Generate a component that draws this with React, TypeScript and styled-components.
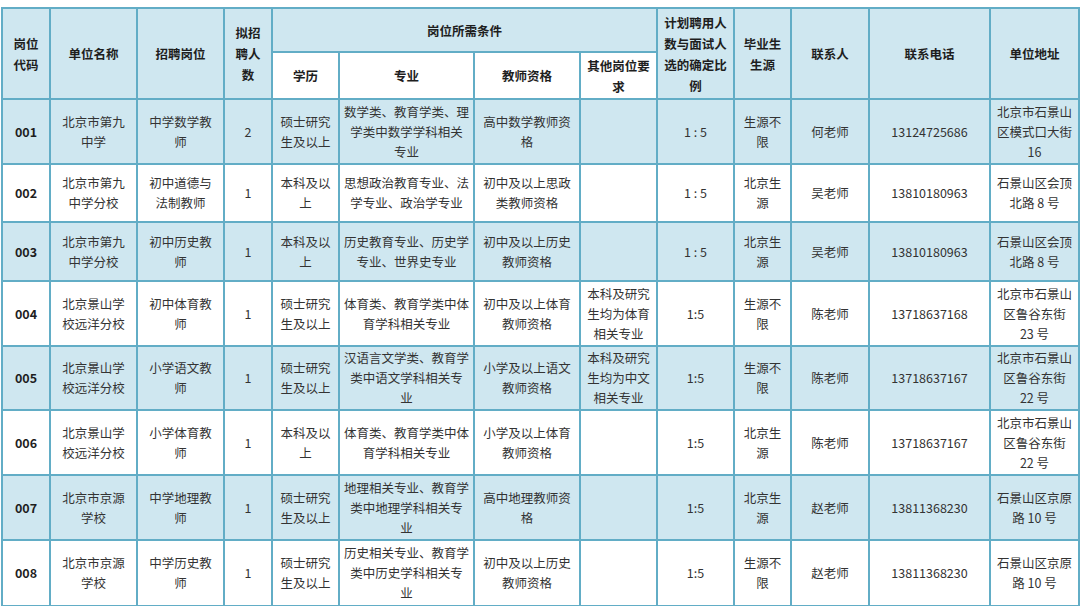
import styled, { createGlobalStyle } from 'styled-components'

/**
 * 招聘岗位数据
 * 每个单元格用 \n 表示原表中的换行位置
 */
interface JobRow {
  code: string
  unit: string
  post: string
  count: string
  degree: string
  major: string
  cert: string
  other: string
  ratio: string
  source: string
  contact: string
  phone: string
  address: string
  height: number
}

const rows: JobRow[] = [
  {
    code: '001',
    unit: '北京市第九\n中学',
    post: '中学数学教\n师',
    count: '2',
    degree: '硕士研究\n生及以上',
    major: '数学类、教育学类、理\n学类中数学学科相关\n专业',
    cert: '高中数学教师资\n格',
    other: '',
    ratio: '1 : 5',
    source: '生源不\n限',
    contact: '何老师',
    phone: '13124725686',
    address: '北京市石景山\n区模式口大街\n16',
    height: 65,
  },
  {
    code: '002',
    unit: '北京市第九\n中学分校',
    post: '初中道德与\n法制教师',
    count: '1',
    degree: '本科及以\n上',
    major: '思想政治教育专业、法\n学专业、政治学专业',
    cert: '初中及以上思政\n类教师资格',
    other: '',
    ratio: '1 : 5',
    source: '北京生\n源',
    contact: '吴老师',
    phone: '13810180963',
    address: '石景山区会顶\n北路 8 号',
    height: 58,
  },
  {
    code: '003',
    unit: '北京市第九\n中学分校',
    post: '初中历史教\n师',
    count: '1',
    degree: '本科及以\n上',
    major: '历史教育专业、历史学\n专业、世界史专业',
    cert: '初中及以上历史\n教师资格',
    other: '',
    ratio: '1 : 5',
    source: '北京生\n源',
    contact: '吴老师',
    phone: '13810180963',
    address: '石景山区会顶\n北路 8 号',
    height: 59,
  },
  {
    code: '004',
    unit: '北京景山学\n校远洋分校',
    post: '初中体育教\n师',
    count: '1',
    degree: '硕士研究\n生及以上',
    major: '体育类、教育学类中体\n育学科相关专业',
    cert: '初中及以上体育\n教师资格',
    other: '本科及研究\n生均为体育\n相关专业',
    ratio: '1:5',
    source: '生源不\n限',
    contact: '陈老师',
    phone: '13718637168',
    address: '北京市石景山\n区鲁谷东街\n23 号',
    height: 65,
  },
  {
    code: '005',
    unit: '北京景山学\n校远洋分校',
    post: '小学语文教\n师',
    count: '1',
    degree: '硕士研究\n生及以上',
    major: '汉语言文学类、教育学\n类中语文学科相关专\n业',
    cert: '小学及以上语文\n教师资格',
    other: '本科及研究\n生均为中文\n相关专业',
    ratio: '1:5',
    source: '生源不\n限',
    contact: '陈老师',
    phone: '13718637167',
    address: '北京市石景山\n区鲁谷东街\n22 号',
    height: 64,
  },
  {
    code: '006',
    unit: '北京景山学\n校远洋分校',
    post: '小学体育教\n师',
    count: '1',
    degree: '本科及以\n上',
    major: '体育类、教育学类中体\n育学科相关专业',
    cert: '小学及以上体育\n教师资格',
    other: '',
    ratio: '1:5',
    source: '北京生\n源',
    contact: '陈老师',
    phone: '13718637167',
    address: '北京市石景山\n区鲁谷东街\n22 号',
    height: 65,
  },
  {
    code: '007',
    unit: '北京市京源\n学校',
    post: '中学地理教\n师',
    count: '1',
    degree: '硕士研究\n生及以上',
    major: '地理相关专业、教育学\n类中地理学科相关专\n业',
    cert: '高中地理教师资\n格',
    other: '',
    ratio: '1:5',
    source: '北京生\n源',
    contact: '赵老师',
    phone: '13811368230',
    address: '石景山区京原\n路 10 号',
    height: 65,
  },
  {
    code: '008',
    unit: '北京市京源\n学校',
    post: '中学历史教\n师',
    count: '1',
    degree: '硕士研究\n生及以上',
    major: '历史相关专业、教育学\n类中历史学科相关专\n业',
    cert: '初中及以上历史\n教师资格',
    other: '',
    ratio: '1:5',
    source: '生源不\n限',
    contact: '赵老师',
    phone: '13811368230',
    address: '石景山区京原\n路 10 号',
    height: 66,
  },
]

/** 列宽 (px) */
const colWidths = [48, 87, 87, 48, 67, 135, 106, 77, 77, 57, 78, 121, 89]

const BLUE = '#cfe7f0'
const LINE = '#62adc6'

const GlobalStyle = createGlobalStyle`
  html, body {
    margin: 0;
    padding: 0;
    height: 606px;
    overflow: hidden;
    background: #ffffff;
  }
`

const Page = styled.div`
  padding: 7px 0 0 1px;
  font-family: "Noto Sans CJK SC", "Noto Sans", sans-serif;
`

const Table = styled.table`
  border-collapse: collapse;
  table-layout: fixed;
  width: 1078px;
`

const HeadCell = styled.th<{ $sub?: boolean; $h?: number }>`
  border: 2px solid ${LINE};
  background: ${({ $sub }) => ($sub ? '#ffffff' : BLUE)};
  height: ${({ $h }) => ($h ? `${$h}px` : 'auto')};
  padding: 0 1px;
  font-size: 12.5px;
  line-height: 21px;
  font-weight: 700;
  color: #1e1e1e;
  text-align: center;
  vertical-align: middle;
  white-space: pre-line;
`

const BodyRow = styled.tr<{ $tint: boolean }>`
  background: ${({ $tint }) => ($tint ? BLUE : '#ffffff')};
`

const Cell = styled.td<{ $bold?: boolean; $h: number }>`
  border: 2px solid ${LINE};
  height: ${({ $h }) => $h - 2}px;
  padding: 0 1px;
  font-size: 12.5px;
  line-height: 20px;
  font-weight: ${({ $bold }) => ($bold ? 700 : 400)};
  color: ${({ $bold }) => ($bold ? '#1e1e1e' : '#333333')};
  text-align: center;
  vertical-align: middle;
  white-space: pre-line;
  overflow: hidden;
`

const fields: (keyof JobRow)[] = [
  'unit', 'post', 'count', 'degree', 'major', 'cert', 'other',
  'ratio', 'source', 'contact', 'phone', 'address',
]

export default function App() {
  return (
    <Page>
      <GlobalStyle />
      <Table>
        <colgroup>
          {colWidths.map((w, i) => (
            <col key={i} style={{ width: w }} />
          ))}
        </colgroup>
        <thead>
          <tr>
            <HeadCell rowSpan={2}>{'岗位\n代码'}</HeadCell>
            <HeadCell rowSpan={2}>单位名称</HeadCell>
            <HeadCell rowSpan={2}>招聘岗位</HeadCell>
            <HeadCell rowSpan={2}>{'拟招\n聘人\n数'}</HeadCell>
            <HeadCell colSpan={4} $h={42}>岗位所需条件</HeadCell>
            <HeadCell rowSpan={2}>{'计划聘用人\n数与面试人\n选的确定比\n例'}</HeadCell>
            <HeadCell rowSpan={2}>{'毕业生\n生源'}</HeadCell>
            <HeadCell rowSpan={2}>联系人</HeadCell>
            <HeadCell rowSpan={2}>联系电话</HeadCell>
            <HeadCell rowSpan={2}>单位地址</HeadCell>
          </tr>
          <tr>
            <HeadCell $sub $h={45}>学历</HeadCell>
            <HeadCell $sub>专业</HeadCell>
            <HeadCell $sub>教师资格</HeadCell>
            <HeadCell $sub>{'其他岗位要\n求'}</HeadCell>
          </tr>
        </thead>
        <tbody>
          {rows.map((r, i) => (
            <BodyRow key={r.code} $tint={i % 2 === 0}>
              <Cell $bold $h={r.height}>{r.code}</Cell>
              {fields.map((f) => (
                <Cell key={f} $h={r.height}>{r[f]}</Cell>
              ))}
            </BodyRow>
          ))}
        </tbody>
      </Table>
    </Page>
  )
}
